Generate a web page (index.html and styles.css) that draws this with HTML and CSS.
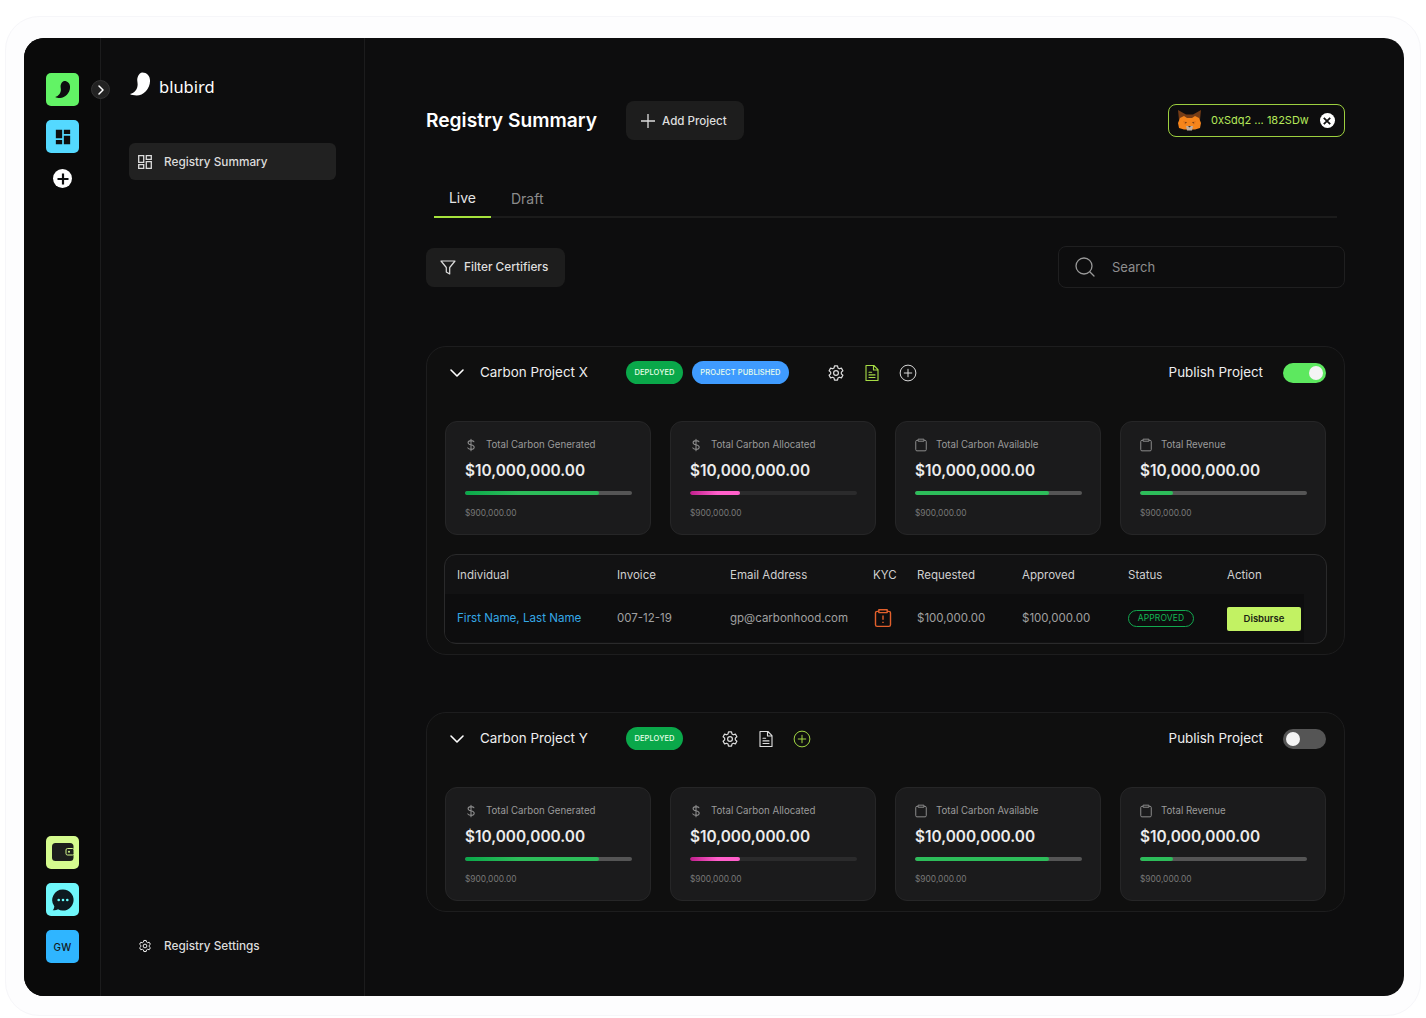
FILE: index.html
```html
<!DOCTYPE html>
<html lang="en">
<head>
<meta charset="utf-8">
<title>Registry Summary</title>
<link rel="stylesheet" href="styles.css">
</head>
<body>
<svg class="defs" width="0" height="0">
	<symbol id="i-gear" viewBox="0 0 24 24"><path fill="none" stroke="currentColor" stroke-width="1.6" stroke-linejoin="round" d="M10 2.500h4l.6 2.800 1.900 1.100 2.700-.9 2 3.500-2.100 1.900v2.200l2.100 1.900-2 3.500-2.700-.9-1.900 1.100-.6 2.800h-4l-.6-2.800-1.900-1.100-2.700.9-2-3.500 2.100-1.900v-2.200L2.800 9l2-3.500 2.700.9 1.900-1.100z"/><circle cx="12" cy="12" r="3.200" fill="none" stroke="currentColor" stroke-width="1.600"/></symbol>
	<symbol id="i-doc" viewBox="0 0 24 24"><path fill="none" stroke="currentColor" stroke-width="1.500" stroke-linejoin="round" stroke-linecap="round" d="M4 2h10.500L20 7.500V22H4zM14 2v6h6M8 11h3.500M8 14.500h8M8 18h8"/></symbol>
	<symbol id="i-plus" viewBox="0 0 24 24"><circle cx="12" cy="12" r="10.500" fill="none" stroke="currentColor" stroke-width="1.300"/><path fill="none" stroke="currentColor" stroke-width="1.300" stroke-linecap="round" d="M12 7v10M7 12h10"/></symbol>
	<symbol id="i-dollar" viewBox="0 0 24 24"><path fill="none" stroke="currentColor" stroke-width="1.800" stroke-linecap="round" d="M12 2v20M17 6.500c-.8-1.500-2.500-2-5-2-3 0-5 1.300-5 3.500 0 5 10.500 2.500 10.500 8 0 2.300-2.300 3.500-5.500 3.500-2.800 0-4.800-.8-5.500-2.500"/></symbol>
	<symbol id="i-clip" viewBox="0 0 24 24"><path fill="none" stroke="currentColor" stroke-width="1.700" stroke-linejoin="round" d="M7 4H5a2 2 0 0 0-2 2v14a2 2 0 0 0 2 2h14a2 2 0 0 0 2-2V6a2 2 0 0 0-2-2h-2M7 2h10v3.500H7z"/></symbol>
	<symbol id="i-chev" viewBox="0 0 16 10"><path fill="none" stroke="currentColor" stroke-width="1.600" stroke-linecap="round" stroke-linejoin="round" d="M2 2l6 6 6-6"/></symbol>
	<symbol id="i-bird" viewBox="0 0 22 24"><path fill="currentColor" d="M13 0c4.500 0 8 3.500 8 8.500C21 17 14 24 7 24c-3 0-5.500-.5-7-1.500 5-1 8-5.500 8-10 0-3-1-5 0-7.500 1-3 3-5 5-5z"/></symbol>
</svg>

<div class="frame">
<div class="app">
	<div class="rail">
		<div class="rail_top">
			<a class="tile t_green" href=""><svg class="bird_sm"><use href="#i-bird"/></svg></a>
			<a class="tile t_blue" href="">
				<svg width="16" height="16" viewBox="0 0 19 19"><path fill="#0d0e0f" d="M1 1h7.500v10H1zM10.500 1H18v5h-7.500zM10.500 8H18v10h-7.500zM1 13h7.500v5H1z"/></svg>
			</a>
			<a class="rail_add" href=""><svg width="12" height="12" viewBox="0 0 12 12"><path fill="none" stroke="#0d0e0f" stroke-width="2.200" d="M6 .5v11M.5 6h11"/></svg></a>
		</div>
		<div class="rail_bottom">
			<a class="tile t_lime" href="">
				<svg width="22" height="19" viewBox="0 0 22 19"><rect x="0" y="0" width="21.500" height="18" rx="3.500" fill="#1c1e1c"/><rect x="14" y="5.500" width="8" height="6.500" rx="1.500" fill="#1c1e1c" stroke="#d4f98c"/><circle cx="17" cy="8.700" r="1" fill="#d4f98c"/></svg>
			</a>
			<a class="tile t_cyan" href="">
				<svg width="22" height="22" viewBox="0 0 22 22"><path fill="#0d1a20" d="M11 .5A10.500 10.500 0 1 1 6 20.200c-1.500.8-3.500 1.300-5.300 1 1-1 1.600-2.500 1.600-4A10.500 10.500 0 0 1 11 .5z"/><circle cx="6.700" cy="11" r="1.300" fill="#6ff"/><circle cx="11" cy="11" r="1.300" fill="#6ff"/><circle cx="15.300" cy="11" r="1.300" fill="#6ff"/></svg>
			</a>
			<a class="tile t_sky" href="">GW</a>
		</div>
	</div>
	<a class="rail_toggle" href=""><svg width="8" height="10" viewBox="0 0 8 10"><path fill="none" stroke="#fff" stroke-width="1.500" stroke-linecap="round" stroke-linejoin="round" d="M2 1l4 4-4 4"/></svg></a>

	<div class="side">
		<div class="side_top">
			<div class="logo">
				<svg class="logo_mark"><use href="#i-bird"/></svg>
				<span>blubird</span>
			</div>
			<a class="side_link on" href="">
				<svg width="14" height="14" viewBox="0 0 14 14"><path fill="none" stroke="currentColor" stroke-width="1.300" d="M.7.7h5v6.600h-5zM8.300.7h5v3.600h-5zM8.300 6.700h5v6.600h-5zM.7 9.700h5v3.600h-5z"/></svg>
				Registry Summary
			</a>
		</div>
		<a class="side_link" href="">
			<svg class="gear_sm" width="14" height="14"><use href="#i-gear"/></svg>
			Registry Settings
		</a>
	</div>

	<div class="main">
		<div class="top_row">
			<div class="top_left">
				<h1>Registry Summary</h1>
				<a class="btn btn_add" href=""><svg width="14" height="14" viewBox="0 0 14 14"><path fill="none" stroke="#ddd" stroke-width="1.300" d="M7 0v14M0 7h14"/></svg>Add Project</a>
			</div>
			<div class="wallet">
				<svg class="fox" width="23" height="21" viewBox="0 0 23 21">
					<path fill="#763d16" d="M0 0l8 4.500h7L23 0l-1 10H1z"/>
					<path fill="#f6851b" d="M2 8l4-2 3 2h5l3-2 4 2 2 5-1 5-5 1.500H6L1 18l-1-5z"/>
					<path fill="#c0ad9e" d="M8 16h7l-1 4.500H9z"/>
					<path fill="#e2761b" d="M5 11l4 1-2 3zM18 11l-4 1 2 3z"/>
					<path fill="#5b3414" d="M7 12l2 .5-1.500 1zM16 12l-2 .5 1.500 1z"/>
					<path fill="#333" d="M10 16h3l-1.500 1.500z"/>
				</svg>
				<span>0xSdq2 ... 182SDw</span>
				<a class="wallet_x" href=""><svg width="8" height="8" viewBox="0 0 8 8"><path fill="none" stroke="#111" stroke-width="1.800" d="M.8.8l6.400 6.400M7.200.8L.8 7.200"/></svg></a>
			</div>
		</div>

		<ul class="tabs">
			<li class="on"><a href="">Live</a></li>
			<li><a href="">Draft</a></li>
		</ul>

		<div class="tool_row">
			<a class="btn btn_filter" href=""><svg width="16" height="15" viewBox="0 0 16 15"><path fill="none" stroke="#ddd" stroke-width="1.200" stroke-linejoin="round" d="M1 1h14L9.700 7.500V14L6.300 12V7.500z"/></svg>Filter Certifiers</a>
			<div class="search">
				<svg width="20" height="20" viewBox="0 0 20 20"><circle cx="9" cy="9" r="8" fill="none" stroke="#999" stroke-width="1.300"/><path stroke="#999" stroke-width="1.300" stroke-linecap="round" d="M15 15l4 4"/></svg>
				<span>Search</span>
			</div>
		</div>

		<section class="project">
			<div class="project_head">
				<svg class="chev"><use href="#i-chev"/></svg>
				<span class="project_name">Carbon Project X</span>
				<span class="pill p_green">DEPLOYED</span>
				<span class="pill p_blue">PROJECT PUBLISHED</span>
				<div class="head_icons">
					<svg class="ico"><use href="#i-gear"/></svg>
					<svg class="ico lime"><use href="#i-doc"/></svg>
					<svg class="ico"><use href="#i-plus"/></svg>
				</div>
				<span class="publish">Publish Project</span>
				<span class="toggle on"></span>
			</div>
			<div class="metrics">
				<div class="metric">
					<div class="metric_label"><svg><use href="#i-dollar"/></svg>Total Carbon Generated</div>
					<div class="metric_value">$10,000,000.00</div>
					<div class="bar"><i class="fill_green" style="width:80%"></i></div>
					<div class="metric_sub">$900,000.00</div>
				</div>
				<div class="metric">
					<div class="metric_label"><svg><use href="#i-dollar"/></svg>Total Carbon Allocated</div>
					<div class="metric_value">$10,000,000.00</div>
					<div class="bar dark"><i class="fill_pink" style="width:30%"></i></div>
					<div class="metric_sub">$900,000.00</div>
				</div>
				<div class="metric">
					<div class="metric_label"><svg><use href="#i-clip"/></svg>Total Carbon Available</div>
					<div class="metric_value">$10,000,000.00</div>
					<div class="bar"><i class="fill_plain" style="width:80%"></i></div>
					<div class="metric_sub">$900,000.00</div>
				</div>
				<div class="metric">
					<div class="metric_label"><svg><use href="#i-clip"/></svg>Total Revenue</div>
					<div class="metric_value">$10,000,000.00</div>
					<div class="bar"><i class="fill_plain" style="width:20%"></i></div>
					<div class="metric_sub">$900,000.00</div>
				</div>
			</div>
			<div class="table">
				<div class="t_row t_head">
					<span>Individual</span><span>Invoice</span><span>Email Address</span><span>KYC</span><span>Requested</span><span>Approved</span><span>Status</span><span>Action</span>
				</div>
				<div class="t_row t_body">
					<a class="t_name" href="">First Name, Last Name</a>
					<span>007-12-19</span>
					<span>gp@carbonhood.com</span>
					<svg class="kyc" width="20" height="20" viewBox="0 0 24 24"><use href="#i-clip"/><path stroke="currentColor" stroke-width="1.700" d="M12 9v5M12 16.500v1.500"/></svg>
					<span>$100,000.00</span>
					<span>$100,000.00</span>
					<span class="approved">APPROVED</span>
					<a class="disburse" href="">Disburse</a>
				</div>
			</div>
		</section>

		<section class="project">
			<div class="project_head">
				<svg class="chev"><use href="#i-chev"/></svg>
				<span class="project_name">Carbon Project Y</span>
				<span class="pill p_green">DEPLOYED</span>
				<div class="head_icons">
					<svg class="ico"><use href="#i-gear"/></svg>
					<svg class="ico"><use href="#i-doc"/></svg>
					<svg class="ico lime"><use href="#i-plus"/></svg>
				</div>
				<span class="publish">Publish Project</span>
				<span class="toggle"></span>
			</div>
			<div class="metrics">
				<div class="metric">
					<div class="metric_label"><svg><use href="#i-dollar"/></svg>Total Carbon Generated</div>
					<div class="metric_value">$10,000,000.00</div>
					<div class="bar"><i class="fill_green" style="width:80%"></i></div>
					<div class="metric_sub">$900,000.00</div>
				</div>
				<div class="metric">
					<div class="metric_label"><svg><use href="#i-dollar"/></svg>Total Carbon Allocated</div>
					<div class="metric_value">$10,000,000.00</div>
					<div class="bar dark"><i class="fill_pink" style="width:30%"></i></div>
					<div class="metric_sub">$900,000.00</div>
				</div>
				<div class="metric">
					<div class="metric_label"><svg><use href="#i-clip"/></svg>Total Carbon Available</div>
					<div class="metric_value">$10,000,000.00</div>
					<div class="bar"><i class="fill_plain" style="width:80%"></i></div>
					<div class="metric_sub">$900,000.00</div>
				</div>
				<div class="metric">
					<div class="metric_label"><svg><use href="#i-clip"/></svg>Total Revenue</div>
					<div class="metric_value">$10,000,000.00</div>
					<div class="bar"><i class="fill_plain" style="width:20%"></i></div>
					<div class="metric_sub">$900,000.00</div>
				</div>
			</div>
		</section>
	</div>
</div>
</div>
</body>
</html>
```

FILE: styles.css
```css
* {margin:0; padding:0; box-sizing:border-box}
li {list-style:none}
a {text-decoration:none; color:inherit}
html, body {height:100%}
body {
	background:#fff;
	font-family:Inter, "Liberation Sans", sans-serif;
	overflow:hidden;
}
.defs {position:absolute}

.frame {
	width:1416px;
	height:1000px;
	margin:16px 0 0 5px;
	padding:21px 16px 19px 18px;
	border:1px solid #f6f6f9;
	border-radius:34px;
	background:#fdfdfe;
}
.app {
	position:relative;
	display:flex;
	width:1380px;
	height:958px;
	background:#0d0d0e;
	border-radius:20px;
	overflow:hidden;
}

/* rail */
.rail {
	width:77px;
	flex:none;
	padding:35px 0 33px 22px;
	display:flex;
	flex-direction:column;
	justify-content:space-between;
	background:#0a0a0a;
	border-right:1px solid #1c1c1d;
}
.rail_top, .rail_bottom {display:flex; flex-direction:column; gap:14px; width:33px}
.tile {
	display:flex;
	align-items:center;
	justify-content:center;
	width:33px;
	height:33px;
	border-radius:5px;
	color:#14181a;
	font-size:10px;
	font-weight:500;
	letter-spacing:.3px;
}
.t_green {background:#62f365}
.t_blue {background:#54d9ff}
.t_lime {background:#d5fb8e}
.t_cyan {background:#6ff7fb}
.t_sky {background:#2fb5ff}
.bird_sm {width:16px; height:17px; color:#0d0e0f}
.rail_add {
	display:flex;
	align-items:center;
	justify-content:center;
	width:19px;
	height:19px;
	margin:2px 0 0 7px;
	border-radius:50%;
	background:#fff;
}
.rail_toggle {
	position:absolute;
	left:67px;
	top:42px;
	display:flex;
	align-items:center;
	justify-content:center;
	width:19px;
	height:19px;
	border-radius:50%;
	background:#222;
	border:1px solid #333;
}

/* sidebar */
.side {
	width:264px;
	flex:none;
	padding:34px 28px 32px 28px;
	display:flex;
	flex-direction:column;
	justify-content:space-between;
	border-right:1px solid #1c1c1d;
}
.logo {
	display:flex;
	align-items:center;
	gap:8px;
	height:24px;
	margin-bottom:47px;
	color:#fff;
	font-family:"Noto Sans", sans-serif;
	font-size:16.500px;
}
.logo_mark {width:21px; height:24px; margin-left:1px; color:#fff}
.logo span {position:relative; top:2px}
.side_link {
	display:flex;
	align-items:center;
	gap:12px;
	width:207px;
	height:37px;
	padding-left:9px;
	border-radius:6px;
	color:#dcdcdc;
	font-size:11.800px;
	font-weight:500;
}
.side_link.on {background:#212121}
.gear_sm {color:#fff}

/* main */
.main {flex:1; padding:63px 59px 0 61px}
.top_row {display:flex; align-items:center; justify-content:space-between}
.top_left {display:flex; align-items:center; gap:29px}
h1 {margin-bottom:2px; color:#fff; font-size:19.200px; font-weight:600}
.btn {
	display:flex;
	align-items:center;
	height:39px;
	border-radius:8px;
	background:#1d1d1d;
	color:#ddd;
	font-size:11.600px;
	font-weight:500;
}
.btn_add {gap:7px; width:118px; padding-left:15px}
.btn_filter {gap:8px; width:139px; padding-left:14px; font-size:11.800px}
.wallet {
	display:flex;
	align-items:center;
	width:177px;
	height:33px;
	padding-left:9px;
	border:1px solid #9ccf3f;
	border-radius:8px;
	color:#b5e85a;
	font-size:11px;
}
.fox {flex:none}
.wallet span {margin:0 0 2px 10px}
.wallet_x {
	display:flex;
	align-items:center;
	justify-content:center;
	width:15px;
	height:15px;
	margin-left:11px;
	border-radius:50%;
	background:#fff;
}

.tabs {
	display:flex;
	height:38px;
	margin:40px 8px 0;
	border-bottom:2px solid #1b1b1b;
}
.tabs li {
	width:57px;
	height:38px;
	text-align:center;
	color:#8b8b8b;
	font-size:14px;
	line-height:37px;
}
.tabs li + li {width:auto; margin-left:20px}
.tabs li.on {color:#e4e4e4; border-bottom:2px solid #a6e23c; line-height:36px}

.tool_row {
	display:flex;
	align-items:center;
	justify-content:space-between;
	margin-top:28px;
}
.search {
	display:flex;
	align-items:center;
	gap:17px;
	width:287px;
	height:42px;
	padding-left:16px;
	border:1px solid #1f1f20;
	border-radius:8px;
	color:#8e8e8e;
	font-size:13px;
}

/* project cards */
.project {
	margin-top:58px;
	padding:0 18px 10px;
	border:1px solid #1d1d1e;
	border-radius:20px;
	background:#0f0f0f;
}
.project + .project {margin-top:57px}
.project_head {
	display:flex;
	align-items:center;
	height:52px;
	margin-bottom:22px;
	padding-bottom:1px;
	color:#eee;
}
.chev {width:16px; height:10px; margin-left:4px; color:#fff}
.project_name {width:146px; margin:0 0 2px 15px; font-size:13.400px}
.pill {
	display:flex;
	align-items:center;
	justify-content:center;
	height:23px;
	border-radius:12px;
	color:#e9ffe9;
	font-size:7.500px;
	font-weight:500;
	letter-spacing:.1px;
}
.p_green {width:57px; background:#0aa84a}
.p_blue {width:97px; margin-left:9px; background:#3f9bff}
.head_icons {display:flex; gap:18px; margin-left:38px; align-items:center}
.ico {width:18px; height:18px; color:#ddd}
.ico.lime {color:#a6dc45}
.publish {margin:0 0 2px auto; font-size:13.400px; color:#eee}
.toggle {
	position:relative;
	width:43px;
	height:20px;
	margin-left:20px;
	border-radius:10px;
	background:#555;
}
.toggle::after {
	content:"";
	position:absolute;
	left:3px;
	top:3px;
	width:14px;
	height:14px;
	border-radius:50%;
	background:#f4f4f4;
}
.toggle.on {background:#5de85f}
.toggle.on::after {left:26px}

.metrics {display:grid; grid-template-columns:repeat(4, 206px); gap:19px}
.metric {
	height:114px;
	padding:15px 18px 0 19px;
	border:1px solid #262627;
	border-radius:12px;
	background:#1b1b1c;
}
.metric_label {
	display:flex;
	align-items:center;
	gap:8px;
	height:15px;
	color:#9a9a9a;
	font-size:9.700px;
}
.metric_label svg {width:14px; height:14px; margin-left:-1px; color:#8d8d8d}
.metric_value {
	margin-top:8px;
	height:22px;
	color:#ececec;
	font-size:15.400px;
	font-weight:600;
	line-height:22px;
}
.bar {
	height:4px;
	margin-top:9px;
	border-radius:2px;
	background:#555;
	overflow:hidden;
}
.bar.dark {background:#2b2b2c}
.bar i {display:block; height:100%; border-radius:2px}
.fill_green {background:linear-gradient(90deg, #0aa84a, #2dbd5a 40%)}
.fill_pink {background:linear-gradient(90deg, #c01f8c, #ff5fca 55%)}
.fill_plain {background:#2dbd5a}
.metric_sub {margin-top:13px; color:#777; font-size:8.400px}

/* table */
.table {
	margin-top:19px;
	height:90px;
	margin-left:-1px;
	margin-right:-1px;
	border:1px solid #2a2a2b;
	border-radius:12px;
	background:#121213;
	overflow:hidden;
}
.t_row {
	display:grid;
	grid-template-columns:160px 113px 143px 44px 105px 106px 99px 77px;
	align-items:center;
	padding-left:12px;
	font-size:11.500px;
}
.t_head {height:39px; color:#d0d0d0}
.t_body {
	height:48px;
	margin-right:22px;
	background:#0d0d0e;
	color:#a0a0a0;
}
.t_name {color:#35a8e6; font-size:11.600px}
.kyc {color:#e2602c}
.approved {
	width:66px;
	height:17px;
	border:1px solid #12a84f;
	border-radius:9px;
	color:#12b854;
	font-size:8.500px;
	line-height:15px;
	text-align:center;
	letter-spacing:.1px;
}
.disburse {
	width:74px;
	height:24px;
	margin-top:1px;
	border-radius:2px;
	background:#c2f263;
	color:#1c1f14;
	font-size:9.500px;
	font-weight:600;
	line-height:24px;
	text-align:center;
}
```
